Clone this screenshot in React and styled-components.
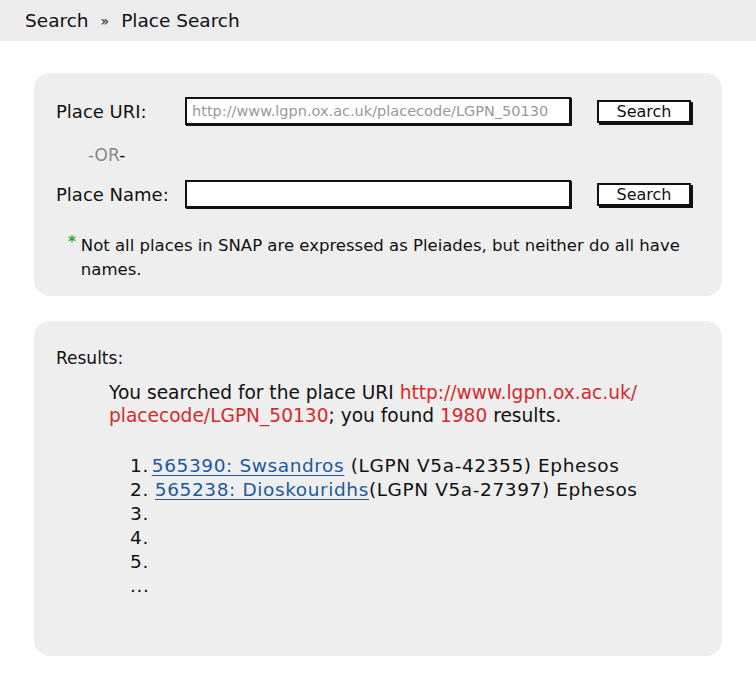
import React from "react";
import styled, { createGlobalStyle } from "styled-components";

const Global = createGlobalStyle`
  body {
    margin: 0;
    background: #ffffff;
    font-family: "DejaVu Sans", "Open Sans", sans-serif;
    color: #111;
  }
`;

const Page = styled.div`
  width: 756px;
  min-height: 678px;
`;

const Crumbs = styled.div`
  height: 41px;
  background: #ececec;
  display: flex;
  align-items: center;
  padding-left: 25px;
  font-size: 18.5px;
  gap: 12px;
`;

const Sep = styled.span`
  font-size: 14px;
`;

const Main = styled.div`
  padding: 32px 34px 0 34px;
  display: flex;
  flex-direction: column;
  gap: 25px;
`;

const Panel = styled.section`
  background: #eeeeee;
  border-radius: 16px;
  height: ${(p) => p.h}px;
  box-sizing: border-box;
  padding: ${(p) => p.pad};
`;

const Row = styled.div`
  display: grid;
  grid-template-columns: 103px 386px 94px;
  column-gap: 26px;
  align-items: center;
  font-size: 18px;
  white-space: nowrap;
`;

const Field = styled.div`
  height: 28px;
  box-sizing: border-box;
  border: 2px solid #111;
  box-shadow: 1px 1px 0 #111;
  background: #fff;
  font-size: 14.5px;
  color: #999;
  padding: 0 5px;
  display: flex;
  align-items: center;
  white-space: nowrap;
  overflow: hidden;
`;

const Button = styled.div`
  height: 23px;
  box-sizing: border-box;
  border: 2px solid #111;
  box-shadow: 2px 2px 0 #111;
  background: #fff;
  font-size: 16px;
  display: flex;
  align-items: center;
  justify-content: center;
`;

const Or = styled.div`
  margin: 19px 0 14px 32px;
  font-size: 17px;
  line-height: 22px;
  color: #888;
  span {
    color: #111;
  }
`;

const Note = styled.div`
  display: flex;
  gap: 5px;
  margin: 26px 0 0 12px;
  font-size: 16.5px;
  line-height: 24px;
  max-width: 630px;
`;

const Star = styled.span`
  color: #2fa52f;
  font-weight: 700;
  font-size: 15px;
  line-height: 16px;
`;

const Heading = styled.div`
  font-size: 17px;
  line-height: 22px;
`;

const Summary = styled.p`
  margin: 12px 0 0 53px;
  width: 570px;
  font-size: 18.6px;
  line-height: 23px;
`;

const Red = styled.span`
  color: #d42b2b;
`;

const List = styled.div`
  margin: 27px 0 0 74px;
  font-size: 18.5px;
  line-height: 24px;
  letter-spacing: 0.6px;
`;

const Item = styled.div`
  display: flex;
  gap: ${(p) => p.gap || 4}px;
`;

const ItemLink = styled.a`
  color: #1d5a9c;
  text-decoration: underline;
  text-underline-offset: 3px;
`;

const results = [
  { id: "565390: Swsandros", rest: " (LGPN V5a-42355) Ephesos", gap: 3 },
  { id: "565238: Dioskouridhs", rest: "(LGPN V5a-27397) Ephesos", gap: 6 },
  null,
  null,
  null,
];

export default function App() {
  return (
    <Page>
      <Global />
      <Crumbs>
        <span>Search</span>
        <Sep>»</Sep>
        <span>Place Search</span>
      </Crumbs>
      <Main>
        <Panel h={223} pad="24px 22px">
          <Row>
            <span>Place URI:</span>
            <Field>http://www.lgpn.ox.ac.uk/placecode/LGPN_50130</Field>
            <Button>Search</Button>
          </Row>
          <Or>
            -OR<span>-</span>
          </Or>
          <Row>
            <span>Place Name:</span>
            <Field />
            <Button>Search</Button>
          </Row>
          <Note>
            <Star>*</Star>
            <span>
              Not all places in SNAP are expressed as Pleiades, but neither do
              all have names.
            </span>
          </Note>
        </Panel>
        <Panel h={335} pad="26px 22px">
          <Heading>Results:</Heading>
          <Summary>
            You searched for the place URI{" "}
            <Red>
              http://www.lgpn.ox.ac.uk/
              <wbr />
              placecode/LGPN_50130
            </Red>
            ; you found <Red>1980</Red> results.
          </Summary>
          <List>
            {results.map((r, i) => (
              <Item key={i} gap={r ? r.gap : 4}>
                <span>{i + 1}.</span>
                {r && (
                  <span>
                    <ItemLink href="#">{r.id}</ItemLink>
                    {r.rest}
                  </span>
                )}
              </Item>
            ))}
            <Item>...</Item>
          </List>
        </Panel>
      </Main>
    </Page>
  );
}
